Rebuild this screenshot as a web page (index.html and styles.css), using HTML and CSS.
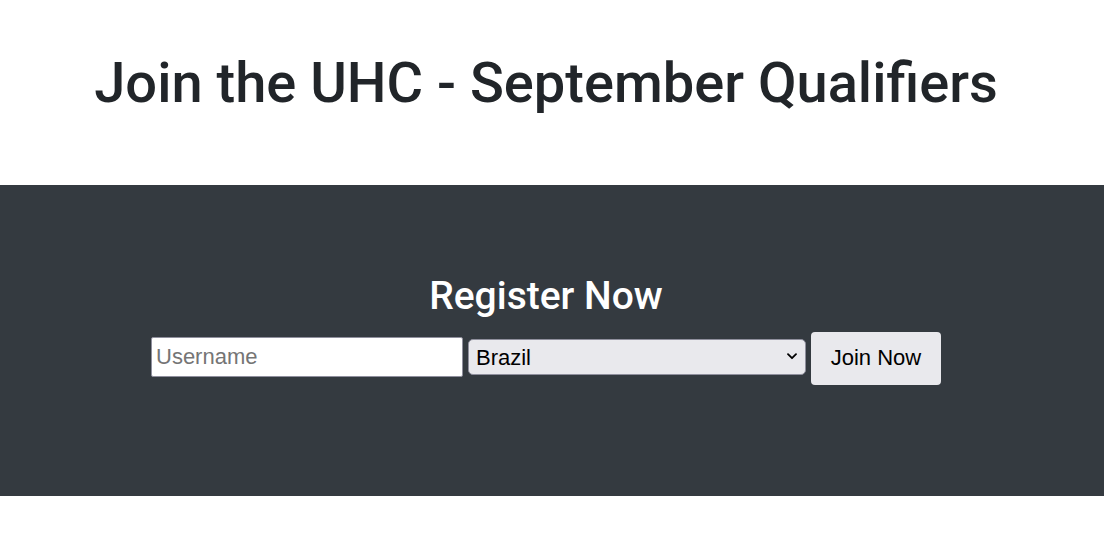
FILE: index.html
```html
<!DOCTYPE html>
<html>
<head>
<meta charset="utf-8">
<link rel="stylesheet" href="styles.css">
</head>
<body>
<header class="hero">
  <h1 class="title">Join the UHC - September Qualifiers</h1>
</header>
<section class="register">
  <h2 class="register-title">Register Now</h2>
  <form class="register-form">
    <input class="field-input" type="text" placeholder="Username">
    <div class="select-wrap">
      <select class="field-select">
        <option>Brazil</option>
      </select>
      <svg class="chevron" width="10" height="7" viewBox="0 0 10 7" aria-hidden="true"><path d="M1 1.2 L5 5.2 L9 1.2" fill="none" stroke="#000" stroke-width="1.8" stroke-linecap="round" stroke-linejoin="round"/></svg>
    </div>
    <button class="join-btn" type="button">Join Now</button>
  </form>
</section>
</body>
</html>
```
FILE: styles.css
```css
html, body {
  margin: 0;
  padding: 0;
  background: #fff;
  font-family: Roboto, "Liberation Sans", sans-serif;
}
.hero {
  box-sizing: border-box;
  height: 185px;
  padding: 50px 12px 0 0;
  display: flex;
  flex-direction: column;
  align-items: center;
}
.title {
  margin: 0;
  font-size: 56px;
  line-height: 1.2;
  font-weight: 500;
  color: #212529;
}
.register {
  box-sizing: border-box;
  background: #343a40;
  height: 311px;
  padding: 88px 12px 0 0;
  display: flex;
  flex-direction: column;
  align-items: center;
}
.register-title {
  margin: 0 0 12px 0;
  color: #fff;
  font-weight: 500;
  font-size: 39px;
  line-height: 1.2;
}
.register-form {
  display: flex;
  align-items: center;
  gap: 5px;
}
.field-input {
  box-sizing: border-box;
  width: 312px;
  height: 40px;
  margin-bottom: 3px;
  border: 1px solid #8f8f9d;
  border-radius: 2px;
  padding: 0 4px;
  font-family: "Liberation Sans", Arial, sans-serif;
  font-size: 22px;
  background: #fff;
}
.field-input::placeholder {
  color: #757575;
}
.select-wrap {
  position: relative;
  display: flex;
  margin-bottom: 2px;
}
.field-select {
  box-sizing: border-box;
  appearance: none;
  -webkit-appearance: none;
  width: 338px;
  height: 36px;
  border: 1px solid #8f8f9d;
  border-radius: 5px;
  background: #e9e9ed;
  font-family: "Liberation Sans", Arial, sans-serif;
  font-size: 22px;
  color: #000;
  padding: 0 30px 0 7px;
}
.chevron {
  position: absolute;
  right: 9px;
  top: 14px;
  pointer-events: none;
}
.join-btn {
  box-sizing: border-box;
  width: 130px;
  height: 53px;
  border: none;
  border-radius: 4px;
  background: #e9e9ed;
  font-family: "Liberation Sans", Arial, sans-serif;
  font-size: 22px;
  color: #000;
}
```
